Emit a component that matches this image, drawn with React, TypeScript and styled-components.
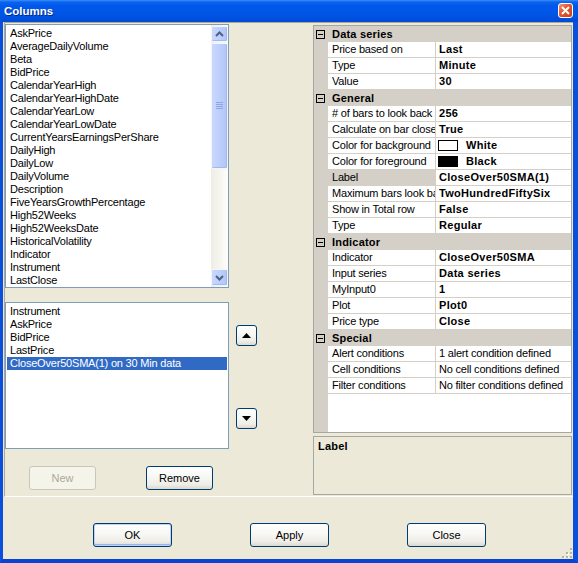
import React from "react";
import styled, { createGlobalStyle, css } from "styled-components";

const available = [
  "AskPrice",
  "AverageDailyVolume",
  "Beta",
  "BidPrice",
  "CalendarYearHigh",
  "CalendarYearHighDate",
  "CalendarYearLow",
  "CalendarYearLowDate",
  "CurrentYearsEarningsPerShare",
  "DailyHigh",
  "DailyLow",
  "DailyVolume",
  "Description",
  "FiveYearsGrowthPercentage",
  "High52Weeks",
  "High52WeeksDate",
  "HistoricalVolatility",
  "Indicator",
  "Instrument",
  "LastClose",
];

const chosen = ["Instrument", "AskPrice", "BidPrice", "LastPrice", "CloseOver50SMA(1) on 30 Min data"];

interface Prop {
  name: string;
  value: string;
  swatch?: string;
  plain?: boolean;
  active?: boolean;
}

interface Category {
  title: string;
  rows: Prop[];
}

const categories: Category[] = [
  {
    title: "Data series",
    rows: [
      { name: "Price based on", value: "Last" },
      { name: "Type", value: "Minute" },
      { name: "Value", value: "30" },
    ],
  },
  {
    title: "General",
    rows: [
      { name: "# of bars to look back", value: "256" },
      { name: "Calculate on bar close", value: "True" },
      { name: "Color for background", value: "White", swatch: "#ffffff" },
      { name: "Color for foreground", value: "Black", swatch: "#000000" },
      { name: "Label", value: "CloseOver50SMA(1)", active: true },
      { name: "Maximum bars look back", value: "TwoHundredFiftySix" },
      { name: "Show in Total row", value: "False" },
      { name: "Type", value: "Regular" },
    ],
  },
  {
    title: "Indicator",
    rows: [
      { name: "Indicator", value: "CloseOver50SMA" },
      { name: "Input series", value: "Data series" },
      { name: "MyInput0", value: "1" },
      { name: "Plot", value: "Plot0" },
      { name: "Price type", value: "Close" },
    ],
  },
  {
    title: "Special",
    rows: [
      { name: "Alert conditions", value: "1 alert condition defined", plain: true },
      { name: "Cell conditions", value: "No cell conditions defined", plain: true },
      { name: "Filter conditions", value: "No filter conditions defined", plain: true },
    ],
  },
];

const GlobalStyle = createGlobalStyle`
  html, body {
    margin: 0;
    padding: 0;
    background: #ffffff;
  }
  body {
    font-family: "Liberation Sans", Arial, sans-serif;
    font-size: 11px;
    letter-spacing: -0.2px;
    color: #000;
  }
  * {
    box-sizing: border-box;
  }
`;

const Window = styled.div`
  width: 578px;
  height: 563px;
  display: flex;
  flex-direction: column;
  background: #0054e3;
`;

const TitleBar = styled.div`
  height: 22px;
  flex: none;
  display: flex;
  align-items: center;
  justify-content: space-between;
  padding: 0 5px 1px 4px;
  background: linear-gradient(180deg, #3b8ff9 0px, #0b63f0 2px, #0058eb 6px, #0055e5 15px, #004ad6 22px);
`;

const Title = styled.span`
  color: #fff;
  font-weight: bold;
  font-size: 11.5px;
  letter-spacing: 0;
  text-shadow: 1px 1px 0 #0a2a8a;
`;

const CloseBox = styled.div`
  width: 15px;
  height: 15px;
  border: 1px solid #fff;
  border-radius: 3px;
  background: linear-gradient(135deg, #f09478 0%, #e0562f 45%, #c9401c 100%);
  display: flex;
  align-items: center;
  justify-content: center;
`;

const Frame = styled.div`
  flex: 1;
  display: flex;
  flex-direction: column;
  background: #ece9d8;
  border-left: 3px solid #0a50dc;
  border-right: 5px solid #0a50dc;
  border-bottom: 4px solid #0844cf;
`;

const Panel = styled.div`
  height: 475px;
  margin-left: 1px;
  display: flex;
  border-top: 1px solid #aca899;
  border-left: 1px solid #aca899;
  border-bottom: 1px solid #fff;
`;

const LeftColumn = styled.div`
  width: 224px;
  display: flex;
  flex-direction: column;
  padding-top: 1px;
`;

const ListBox = styled.div<{ $height: number; $gap?: number }>`
  height: ${(p) => p.$height}px;
  margin-top: ${(p) => p.$gap ?? 0}px;
  border: 1px solid #7f9db9;
  background: #fff;
  display: flex;
  overflow: hidden;
`;

const ListItems = styled.div`
  flex: 1;
  padding: 2px 1px 0 1px;
  overflow: hidden;
`;

const ListItem = styled.div<{ $selected?: boolean }>`
  height: 13px;
  line-height: 13px;
  padding-left: 3px;
  white-space: nowrap;
  ${(p) =>
    p.$selected &&
    css`
      background: #316ac5;
      color: #fff;
    `}
`;

const ScrollBar = styled.div`
  width: 17px;
  display: flex;
  flex-direction: column;
  gap: 1px;
  padding: 1px 0;
  background: linear-gradient(90deg, #eeede5 0%, #f7f7f2 60%, #fdfdfb 100%);
`;

const scrollPart = css`
  border: 1px solid #f2f5fe;
  border-radius: 2px;
  background: linear-gradient(90deg, #c9d8fd 0%, #bccefa 55%, #b1c6f6 100%);
  box-shadow: inset -1px -1px 0 #a3b8ee;
  display: flex;
  align-items: center;
  justify-content: center;
`;

const ScrollButton = styled.div<{ $h: number }>`
  ${scrollPart};
  height: ${(p) => p.$h}px;
  flex: none;
`;

const ScrollThumb = styled.div`
  ${scrollPart};
  height: 126px;
  flex: none;
`;

const ScrollTrack = styled.div`
  flex: 1;
`;

const ListButtons = styled.div`
  display: flex;
  gap: 50px;
  padding-left: 24px;
  margin-top: 17px;
`;

const XpButton = styled.button<{ $w: number; $h?: number; $default?: boolean }>`
  width: ${(p) => p.$w}px;
  height: ${(p) => p.$h ?? 24}px;
  padding: 0;
  border: 1px solid #003c74;
  border-radius: 3px;
  font-family: "Liberation Sans", Arial, sans-serif;
  font-size: 11px;
  color: #000;
  background: linear-gradient(180deg, #ffffff 0%, #f7f7f4 45%, #eeede7 80%, #dcd8cd 100%);
  display: flex;
  align-items: center;
  justify-content: center;
  ${(p) =>
    p.$default &&
    css`
      box-shadow: inset 0 0 0 1px #bcd2f6, inset 0 -1px 0 1px #98b4ea;
    `}
  &:disabled {
    border-color: #c9c7ba;
    color: #aca899;
    background: #f5f4ea;
  }
`;

const MiddleColumn = styled.div`
  width: 84px;
  display: flex;
  flex-direction: column;
  gap: 62px;
  padding: 302px 0 0 7px;
`;

const RightColumn = styled.div`
  width: 260px;
  display: flex;
  flex-direction: column;
  gap: 3px;
  padding-top: 2px;
`;

const Grid = styled.div`
  width: 259px;
  height: 408px;
  border: 1px solid #a7a6a0;
  background: linear-gradient(90deg, #d4d0c8 14px, #ffffff 14px);
  overflow: hidden;
`;

const CategoryRow = styled.div`
  height: 16px;
  display: flex;
  align-items: center;
  background: #d4d0c8;
  font-weight: bold;
  letter-spacing: 0.2px;
`;

const Expander = styled.div`
  width: 14px;
  display: flex;
  justify-content: center;
  padding-right: 1px;
`;

const CategoryTitle = styled.span`
  padding-left: 4px;
`;

const PropRow = styled.div`
  height: 16px;
  display: grid;
  grid-template-columns: 14px 107px 1px 1fr;
`;

const NameCell = styled.div<{ $active?: boolean }>`
  grid-column: 2;
  padding-left: 4px;
  line-height: 15px;
  white-space: nowrap;
  overflow: hidden;
  border-bottom: 1px solid #d4d0c8;
  background: ${(p) => (p.$active ? "#d4d0c8" : "#fff")};
`;

const Divider = styled.div`
  background: #d4d0c8;
`;

const ValueCell = styled.div<{ $plain?: boolean }>`
  padding-left: 3px;
  line-height: 15px;
  white-space: nowrap;
  overflow: hidden;
  display: flex;
  align-items: center;
  gap: 8px;
  border-bottom: 1px solid #d4d0c8;
  font-weight: ${(p) => (p.$plain ? "normal" : "bold")};
  letter-spacing: ${(p) => (p.$plain ? "-0.2px" : "0.3px")};
`;

const Swatch = styled.span<{ $color: string }>`
  width: 20px;
  height: 11px;
  flex: none;
  margin-left: -1px;
  border: 1px solid #000;
  background: ${(p) => p.$color};
`;

const HelpPanel = styled.div`
  width: 259px;
  height: 59px;
  border: 1px solid #a7a6a0;
  padding: 3px 4px;
  font-weight: bold;
  letter-spacing: 0.2px;
`;

const Footer = styled.div`
  flex: 1;
  position: relative;
  display: flex;
  gap: 78px;
  padding: 26px 0 0 90px;
`;

const Grip = styled.svg`
  position: absolute;
  right: 1px;
  bottom: 1px;
`;

const Chevron = ({ down }: { down?: boolean }) => (
  <svg width="9" height="6" viewBox="0 0 9 6">
    <path
      d={down ? "M1 1 L4.5 4.5 L8 1" : "M1 5 L4.5 1.5 L8 5"}
      fill="none"
      stroke="#4d6185"
      strokeWidth="2"
    />
  </svg>
);

const Triangle = ({ down }: { down?: boolean }) => (
  <svg width="9" height="5" viewBox="0 0 9 5">
    <path d={down ? "M0 0 H9 L4.5 5 Z" : "M0 5 H9 L4.5 0 Z"} fill="#000" />
  </svg>
);

const App: React.FC = () => {
  return (
    <>
      <GlobalStyle />
      <Window>
        <TitleBar>
          <Title>Columns</Title>
          <CloseBox>
            <svg width="9" height="9" viewBox="0 0 9 9">
              <path d="M1 1 L8 8 M8 1 L1 8" stroke="#fff" strokeWidth="2" />
            </svg>
          </CloseBox>
        </TitleBar>
        <Frame>
          <Panel>
            <LeftColumn>
              <ListBox $height={264}>
                <ListItems>
                  {available.map((item) => (
                    <ListItem key={item}>{item}</ListItem>
                  ))}
                </ListItems>
                <ScrollBar>
                  <ScrollButton $h={16}>
                    <Chevron />
                  </ScrollButton>
                  <ScrollThumb>
                    <svg width="7" height="8" viewBox="0 0 7 8">
                      {[0, 2, 4, 6].map((y) => (
                        <rect key={y} x="0" y={y} width="7" height="1" fill="#8ca5e6" />
                      ))}
                    </svg>
                  </ScrollThumb>
                  <ScrollTrack />
                  <ScrollButton $h={17}>
                    <Chevron down />
                  </ScrollButton>
                </ScrollBar>
              </ListBox>
              <ListBox $height={147} $gap={14}>
                <ListItems>
                  {chosen.map((item, i) => (
                    <ListItem key={item} $selected={i === chosen.length - 1}>
                      {item}
                    </ListItem>
                  ))}
                </ListItems>
              </ListBox>
              <ListButtons>
                <XpButton $w={67} disabled>
                  New
                </XpButton>
                <XpButton $w={67}>Remove</XpButton>
              </ListButtons>
            </LeftColumn>
            <MiddleColumn>
              <XpButton $w={21} $h={21}>
                <Triangle />
              </XpButton>
              <XpButton $w={21} $h={21}>
                <Triangle down />
              </XpButton>
            </MiddleColumn>
            <RightColumn>
              <Grid>
                {categories.map((cat) => (
                  <React.Fragment key={cat.title}>
                    <CategoryRow>
                      <Expander>
                        <svg width="9" height="9" viewBox="0 0 9 9">
                          <rect x="0.5" y="0.5" width="8" height="8" fill="none" stroke="#000" />
                          <rect x="2" y="4" width="5" height="1" fill="#000" />
                        </svg>
                      </Expander>
                      <CategoryTitle>{cat.title}</CategoryTitle>
                    </CategoryRow>
                    {cat.rows.map((row) => (
                      <PropRow key={cat.title + row.name}>
                        <NameCell $active={row.active}>{row.name}</NameCell>
                        <Divider />
                        <ValueCell $plain={row.plain}>
                          {row.swatch && <Swatch $color={row.swatch} />}
                          {row.value}
                        </ValueCell>
                      </PropRow>
                    ))}
                  </React.Fragment>
                ))}
              </Grid>
              <HelpPanel>Label</HelpPanel>
            </RightColumn>
          </Panel>
          <Footer>
            <XpButton $w={79} $default>
              OK
            </XpButton>
            <XpButton $w={79}>Apply</XpButton>
            <XpButton $w={79}>Close</XpButton>
            <Grip width="10" height="10" viewBox="0 0 10 10">
              {[
                [8, 0],
                [8, 4],
                [4, 4],
                [8, 8],
                [4, 8],
                [0, 8],
              ].map(([x, y]) => (
                <g key={`${x}-${y}`}>
                  <rect x={x + 1} y={y + 1} width="2" height="2" fill="#fff" />
                  <rect x={x} y={y} width="2" height="2" fill="#b8b4a2" />
                </g>
              ))}
            </Grip>
          </Footer>
        </Frame>
      </Window>
    </>
  );
};

export default App;
